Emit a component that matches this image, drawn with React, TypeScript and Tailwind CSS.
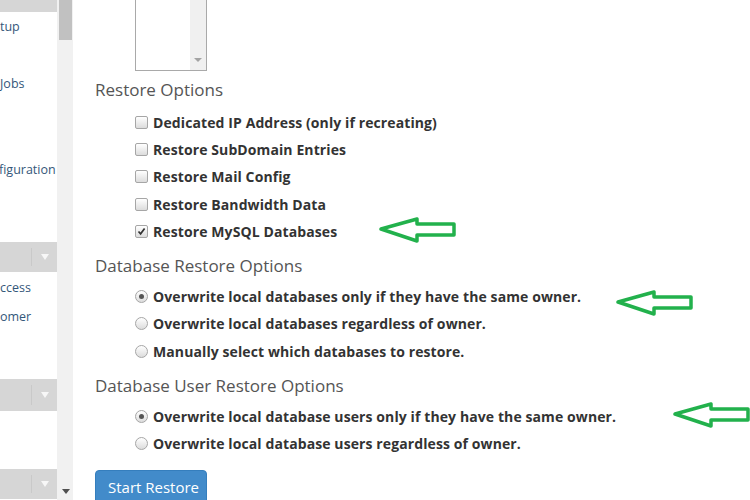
import React from 'react'

const sans = { fontFamily: '"Open Sans", "Noto Sans", sans-serif' }

const SideBar = ({ className, arrow = true }: { className: string; arrow?: boolean }) => (
  <div className={`flex items-center bg-[#d6d6d6] ${className}`}>
    <div className="w-[31px]" />
    <div className="w-px self-stretch my-[6px] bg-[#c9c9c9]" />
    <div className="flex-1 flex justify-center">
      {arrow && (
        <svg width="10" height="8" viewBox="0 0 10 8">
          <path d="M1 1 L9 1 L5 7 Z" fill="#f7f7f7" />
        </svg>
      )}
    </div>
  </div>
)

const SideItem = ({ text, className = '' }: { text: string; className?: string }) => (
  <div className={`h-[29px] flex items-center text-[12.5px] text-[#34577a] whitespace-nowrap ${className}`}>
    {text}
  </div>
)

const Checkbox = ({ checked }: { checked?: boolean }) => (
  <span className="w-[13px] h-[13px] rounded-[2px] border border-[#a6a6a6] bg-gradient-to-b from-white to-[#dcdcdc] flex items-center justify-center shrink-0">
    {checked && (
      <svg width="9" height="9" viewBox="0 0 9 9">
        <path d="M1.5 4.5 L3.6 6.8 L7.6 1.5" stroke="#333" strokeWidth="1.7" fill="none" />
      </svg>
    )}
  </span>
)

const Radio = ({ checked }: { checked?: boolean }) => (
  <span className="w-[13px] h-[13px] rounded-full border border-[#a6a6a6] bg-gradient-to-b from-white to-[#dcdcdc] flex items-center justify-center shrink-0">
    {checked && <span className="w-[5px] h-[5px] rounded-full bg-[#555]" />}
  </span>
)

const Row = ({ children, label, h }: { children: React.ReactNode; label: string; h: string }) => (
  <div className={`flex items-center gap-[5px] pl-[40px] ${h}`}>
    {children}
    <span className="text-[14px] font-bold text-[#333] tracking-[0.1px] whitespace-nowrap">{label}</span>
  </div>
)

const Heading = ({ text, className }: { text: string; className: string }) => (
  <div className={`h-[30px] leading-[30px] text-[17px] text-[#555] ${className}`}>{text}</div>
)

const Arrow = ({ left, top }: { left: number; top: number }) => (
  <svg
    className="absolute"
    style={{ left, top }}
    width="80"
    height="28"
    viewBox="0 0 80 28"
  >
    <path
      d="M2 12 L38 2 L38 7 L75 7 L75 18 L38 18 L38 24 Z"
      fill="none"
      stroke="#22b14c"
      strokeWidth="3.5"
      strokeLinejoin="round"
    />
  </svg>
)

export default function App() {
  return (
    <div className="relative w-[750px] h-[500px] overflow-hidden flex bg-white" style={sans}>
      {/* Sidebar (scrolled, clipped) */}
      <div className="w-[57px] shrink-0 overflow-hidden bg-white">
        <SideBar className="h-[12px]" arrow={false} />
        <SideItem text="tup" className="mt-[1px]" />
        <SideItem text="Jobs" className="mt-[28px]" />
        <SideItem text="figuration" className="mt-[57px] -ml-[1px]" />
        <SideBar className="h-[30px] mt-[57px]" />
        <SideItem text="ccess" className="mt-[2px]" />
        <SideItem text="omer" />
        <SideBar className="h-[32px] mt-[47px]" />
        <SideBar className="h-[30px] mt-[58px]" />
      </div>

      {/* Sidebar scrollbar */}
      <div className="w-[16px] shrink-0 bg-[#f1f1f1] flex flex-col items-center justify-between pl-[1px]">
        <div className="w-[13px] h-[40px] bg-[#c1c1c1]" />
        <svg width="8" height="6" viewBox="0 0 8 6" className="mb-[5px]">
          <path d="M0 0 L8 0 L4 5 Z" fill="#505050" />
        </svg>
      </div>

      {/* Main content */}
      <div className="flex-1 pl-[22px] overflow-hidden">
        <div className="ml-[40px] w-[72px] h-[71px] border-x border-b border-[#a9a9a9] flex justify-end">
          <div className="w-[16px] bg-[#f0f0f0] flex flex-col justify-end items-center pb-[7px]">
            <svg width="8" height="5" viewBox="0 0 8 5">
              <path d="M0 0 L8 0 L4 4 Z" fill="#a3a3a3" />
            </svg>
          </div>
        </div>

        <Heading text="Restore Options" className="mt-[4px]" />
        <div className="mt-[3.5px]">
          <Row label="Dedicated IP Address (only if recreating)" h="h-[27.3px]"><Checkbox /></Row>
          <Row label="Restore SubDomain Entries" h="h-[27.3px]"><Checkbox /></Row>
          <Row label="Restore Mail Config" h="h-[27.3px]"><Checkbox /></Row>
          <Row label="Restore Bandwidth Data" h="h-[27.3px]"><Checkbox /></Row>
          <Row label="Restore MySQL Databases" h="h-[27.3px]"><Checkbox checked /></Row>
        </div>

        <Heading text="Database Restore Options" className="mt-[6px]" />
        <div className="mt-[1.5px]">
          <Row label="Overwrite local databases only if they have the same owner." h="h-[27.5px]"><Radio checked /></Row>
          <Row label="Overwrite local databases regardless of owner." h="h-[27.5px]"><Radio /></Row>
          <Row label="Manually select which databases to restore." h="h-[27.5px]"><Radio /></Row>
        </div>

        <Heading text="Database User Restore Options" className="mt-[6px]" />
        <div className="mt-[2.5px]">
          <Row label="Overwrite local database users only if they have the same owner." h="h-[27px]"><Radio checked /></Row>
          <Row label="Overwrite local database users regardless of owner." h="h-[27px]"><Radio /></Row>
        </div>

        <div className="mt-[12.5px]">
          <button className="w-[112px] h-[34px] rounded-[4px] bg-[#428bca] border border-[#357ebd] text-white text-[15px] text-left pl-[12px]">
            Start Restore
          </button>
        </div>
      </div>

      {/* Annotation arrows */}
      <Arrow left={379} top={217} />
      <Arrow left={616} top={290} />
      <Arrow left={673} top={402} />
    </div>
  )
}
